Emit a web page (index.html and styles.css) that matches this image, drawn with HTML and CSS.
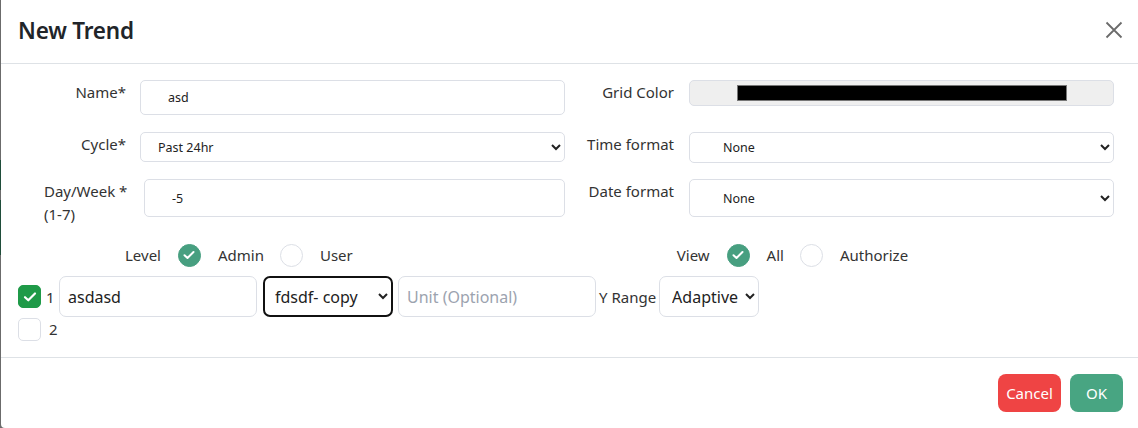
FILE: index.html
```html
<!DOCTYPE html>
<html lang="en">
<head>
<meta charset="utf-8">
<title>New Trend</title>
<link rel="stylesheet" href="styles.css">
</head>
<body>
<div class="modal">
  <div class="modal-header">
    <h2 class="modal-title">New Trend</h2>
    <button class="close-btn" aria-label="Close">
      <svg width="18" height="18" viewBox="0 0 18 18"><path d="M1.5 1.5 L16.5 16.5 M16.5 1.5 L1.5 16.5" stroke="#6b6b6b" stroke-width="1.8" fill="none"/></svg>
    </button>
  </div>
  <div class="modal-body">
    <div class="form-grid">
      <label class="lbl lbl-l">Name*</label>
      <input class="field field-name" type="text" value="asd">
      <label class="lbl lbl-r">Grid Color</label>
      <div class="color-field"><span class="swatch"></span></div>

      <label class="lbl lbl-l">Cycle*</label>
      <select class="field sel sel-cycle"><option>Past 24hr</option></select>
      <label class="lbl lbl-r">Time format</label>
      <select class="field sel sel-time"><option>None</option></select>

      <label class="lbl lbl-day"><span>Day/Week *</span><span>(1-7)</span></label>
      <input class="field field-day" type="text" value="-5">
      <label class="lbl lbl-r">Date format</label>
      <select class="field sel sel-date"><option>None</option></select>
    </div>

    <div class="option-row">
      <div class="opt-group opt-level">
        <span class="opt-label">Level</span>
        <span class="radio on"><svg width="12" height="10" viewBox="0 0 12 10"><path d="M1.5 5.2 L4.5 8 L10.5 2" stroke="#fff" stroke-width="2" fill="none" stroke-linecap="round" stroke-linejoin="round"/></svg></span>
        <span class="opt-text">Admin</span>
        <span class="radio"></span>
        <span class="opt-text">User</span>
      </div>
      <div class="opt-group opt-view">
        <span class="opt-label">View</span>
        <span class="radio on"><svg width="12" height="10" viewBox="0 0 12 10"><path d="M1.5 5.2 L4.5 8 L10.5 2" stroke="#fff" stroke-width="2" fill="none" stroke-linecap="round" stroke-linejoin="round"/></svg></span>
        <span class="opt-text">All</span>
        <span class="radio"></span>
        <span class="opt-text">Authorize</span>
      </div>
    </div>

    <div class="series-row">
      <span class="chk on"><svg width="14" height="12" viewBox="0 0 14 12"><path d="M2 6.2 L5.3 9.3 L12 2.5" stroke="#fff" stroke-width="2.2" fill="none" stroke-linecap="round" stroke-linejoin="round"/></svg></span>
      <span class="idx">1</span>
      <input class="sfield s-name" type="text" value="asdasd">
      <select class="sfield s-src"><option>fdsdf- copy</option></select>
      <input class="sfield s-unit" type="text" placeholder="Unit (Optional)">
      <span class="yr">Y Range</span>
      <select class="sfield s-range"><option>Adaptive</option></select>
    </div>
    <div class="series-row row2">
      <span class="chk"></span>
      <span class="idx">2</span>
    </div>
  </div>
  <div class="modal-footer">
    <button class="btn btn-cancel">Cancel</button>
    <button class="btn btn-ok">OK</button>
  </div>
</div>
</body>
</html>
```
FILE: styles.css
```css
* { box-sizing: border-box; }
html, body { height: 100%; }
body {
  margin: 0;
  background: linear-gradient(to bottom, #6b6b6b 0, #6b6b6b 160px, #1f4d3a 160px, #1f4d3a 190px, #6b6b6b 190px, #6b6b6b 200px, #1f4d3a 200px, #1f4d3a 255px, #6b6b6b 255px);
  font-family: "Noto Sans", "Open Sans", sans-serif;
  color: #333;
  overflow: hidden;
}
.modal {
  margin-left: 1px;
  height: 428px;
  background: #fff;
  border-radius: 0 0 0 4px;
  display: flex;
  flex-direction: column;
}
.modal-header {
  flex: 0 0 64px;
  border-bottom: 1px solid #dee2e6;
  display: flex;
  align-items: center;
  justify-content: space-between;
  padding: 0 14px 0 17px;
}
.modal-title {
  margin: 0 0 2px;
  font-size: 22.5px;
  font-weight: 600;
  color: #212529;
  letter-spacing: -0.2px;
}
.close-btn {
  border: 0;
  background: none;
  padding: 0;
  width: 20px;
  height: 20px;
  display: flex;
  align-items: center;
  justify-content: center;
  margin-bottom: 4px;
}
.modal-body {
  flex: 1;
  padding: 16px 0 0 16px;
  border-bottom: 1px solid #dee2e6;
}
.form-grid {
  display: grid;
  grid-template-columns: 123px 425px 124px 425px;
  grid-template-rows: 52px 47px 38px;
  align-items: start;
}
.lbl {
  font-size: 15px;
  color: #333;
  text-align: right;
  line-height: 23px;
  padding-top: 1px;
  white-space: nowrap;
}
.lbl-l { padding-right: 14px; }
.lbl-r { padding-right: 15px; }
.field {
  border: 1px solid #dcdfe6;
  border-radius: 5px;
  background: #fff;
  color: #222;
  font-family: "Noto Sans", sans-serif;
  font-size: 12.5px;
  outline: none;
}
.field-name { height: 35px; padding: 0 0 0 27px; }
.color-field {
  height: 26px;
  border: 1px solid #dcdfe6;
  border-radius: 5px;
  background: #efefef;
  display: flex;
  align-items: center;
  padding-left: 47px;
}
.swatch {
  width: 330px;
  height: 16px;
  background: #000;
  border: 1px solid #777;
}
.sel-cycle { height: 30px; padding-left: 13px; }
.sel-time { height: 31px; padding-left: 29px; }
.lbl-day {
  display: flex;
  flex-direction: column;
  text-align: left;
  padding-left: 27px;
  padding-top: 1px;
}
.field-day { margin-left: 4px; height: 38px; padding-left: 27px; }
.sel-date { height: 38px; padding-left: 29px; }

.option-row {
  display: flex;
  height: 34px;
  margin-top: 21px;
  align-items: center;
  font-size: 15px;
  color: #333;
}
.opt-group { display: flex; align-items: center; }
.opt-level { margin-left: 108px; }
.opt-view { margin-left: 308px; }
.opt-label { margin-right: 17px; }
.opt-text { margin-left: 17px; margin-right: 16px; }
.radio {
  width: 23px;
  height: 23px;
  border-radius: 50%;
  border: 1px solid #dcdfe6;
  background: #fff;
  display: inline-flex;
  align-items: center;
  justify-content: center;
}
.radio.on { background: #479f80; border-color: #479f80; }

.series-row {
  display: flex;
  align-items: center;
  height: 41px;
  margin-top: 4px;
  margin-left: 1px;
}
.row2 { height: 24px; margin-top: 0; }
.chk {
  width: 23px;
  height: 23px;
  border-radius: 5px;
  border: 1px solid #dcdfe6;
  background: #fff;
  display: inline-flex;
  align-items: center;
  justify-content: center;
}
.chk.on { background: #1f9a48; border-color: #1f9a48; }
.idx { font-size: 15px; color: #333; margin-left: 5px; width: 13px; }
.row2 .idx { margin-left: 8px; }
.sfield {
  height: 41px;
  border: 1px solid #dcdfe6;
  border-radius: 7px;
  background: #fff;
  font-family: "Noto Sans", sans-serif;
  font-size: 16px;
  color: #222;
  outline: none;
}
.s-name { width: 198px; padding-left: 8px; }
.s-src { width: 130px; margin-left: 6px; border: 2px solid #111; padding-left: 6px; }
.s-unit { width: 198px; margin-left: 5px; padding-left: 8px; }
.s-unit::placeholder { color: #9ca3af; }
.yr { font-size: 15px; margin-left: 3px; color: #333; }
.s-range { width: 100px; margin-left: 3px; height: 41px; padding-left: 8px; }

.modal-footer {
  flex: 0 0 70px;
  display: flex;
  justify-content: flex-end;
  align-items: center;
  gap: 9px;
  padding-right: 15px;
}
.btn {
  height: 38px;
  border: 0;
  border-radius: 8px;
  color: #fff;
  font-family: "Noto Sans", sans-serif;
  font-size: 15px;
  padding: 0;
}
.btn-cancel { background: #ef4444; width: 63px; }
.btn-ok { background: #48a582; width: 53px; }
```
